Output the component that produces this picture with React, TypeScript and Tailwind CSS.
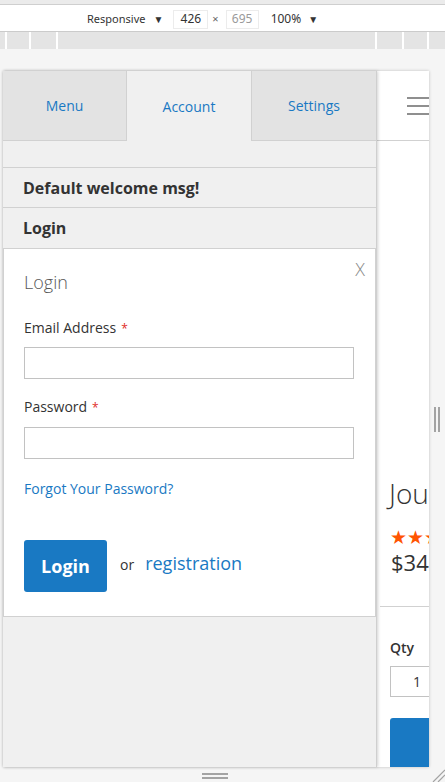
import React from 'react';

const TABS = [
    { label: 'Menu', active: false },
    { label: 'Account', active: true },
    { label: 'Settings', active: false },
];

function DeviceToolbar() {
    return (
        <div className="h-[27px] bg-white border-b border-[#cbcbcb] flex items-center pt-[2px] text-[11px] text-[#333] font-['Noto_Sans',sans-serif]">
            <div className="pl-[87px] flex items-center">
                <span>Responsive</span>
                <span className="ml-[8px] text-[10px]">▼</span>
            </div>
            <div className="ml-[10px] w-[35px] h-[19px] border border-[#ececec] flex items-center justify-center text-[12px]">426</div>
            <span className="ml-[4px] text-[11px] text-[#666]">×</span>
            <div className="ml-[7px] w-[33px] h-[19px] border border-[#ececec] flex items-center justify-center text-[12px] text-[#9a9a9a]">695</div>
            <div className="ml-[12px] flex items-center">
                <span className="text-[12px]">100%</span>
                <span className="ml-[7px] text-[10px]">▼</span>
            </div>
        </div>
    );
}

function Ruler() {
    const segs = [7, 24, 27, 319, 27, 25];
    return (
        <div className="h-[17px] bg-[#e4e4e4] flex">
            {segs.map((w, i) => (
                <div key={i} style={{ width: w }} className="h-full border-r-2 border-white shrink-0" />
            ))}
        </div>
    );
}

function LoginPopup() {
    return (
        <div className="relative bg-white border border-[#d1d1d1] px-[20px] pt-[20px] pb-[24px]">
            <span className="absolute right-[10px] top-[7px] text-[18px] font-light text-[#8a8a8a]">X</span>
            <h2 className="text-[18px] leading-[26px] font-light text-[#575757]">Login</h2>

            <label className="block mt-[23px] text-[14px] leading-[20px] text-[#333]">
                Email Address<span className="ml-[5px] text-[12px] text-[#e02b27]">*</span>
            </label>
            <input className="block mt-[8px] w-[330px] h-[32px] border border-[#c2c2c2] bg-white" />

            <label className="block mt-[18px] text-[14px] leading-[20px] text-[#333]">
                Password<span className="ml-[5px] text-[12px] text-[#e02b27]">*</span>
            </label>
            <input type="password" className="block mt-[9px] w-[330px] h-[32px] border border-[#c2c2c2] bg-white" />

            <a className="block mt-[20px] text-[14px] leading-[20px] text-[#1979c3]">Forgot Your Password?</a>

            <div className="mt-[41px] flex items-center">
                <button className="w-[83px] h-[52px] bg-[#1979c3] rounded-[3px] text-white font-bold text-[18px]">Login</button>
                <div className="flex items-baseline mb-[6px]">
                    <span className="ml-[13px] text-[14px] text-[#333]">or</span>
                    <a className="ml-[11px] text-[18px] text-[#1979c3]">registration</a>
                </div>
            </div>
        </div>
    );
}

function Drawer() {
    return (
        <div className="w-[374px] shrink-0 h-full bg-[#f0f0f0] flex flex-col border-r border-[#cfcfcf] shadow-[1px_0_3px_rgba(0,0,0,0.18)] relative z-10">
            <div className="h-[70px] flex shrink-0">
                {TABS.map((t, i) => (
                    <div
                        key={t.label}
                        className={`flex items-center justify-center text-[14px] text-[#1979c3] ${i === 2 ? 'flex-1' : 'w-[124px]'} ${t.active
                            ? 'bg-[#f0f0f0]'
                            : 'bg-[#e3e3e3] border-b border-[#d1d1d1]'
                            } ${i === 0 ? 'border-r border-[#d1d1d1]' : ''} ${i === 2 ? 'border-l border-[#d1d1d1]' : ''}`}
                    >
                        {t.label}
                    </div>
                ))}
            </div>
            <div className="h-[26px]" />
            <div className="h-[40px] border-t border-[#d1d1d1] flex items-center pl-[20px] text-[16px] font-bold text-[#333]">
                Default welcome msg!
            </div>
            <div className="h-[41px] border-t border-[#d1d1d1] flex items-center pl-[20px] text-[16px] font-bold text-[#333]">
                Login
            </div>
            <LoginPopup />
        </div>
    );
}

function PageBehind() {
    return (
        <div className="flex-1 h-full bg-white overflow-hidden">
            <div className="h-[70px] border-b border-[#d1d1d1] flex items-center pl-[30px]">
                <div className="flex flex-col gap-[6px]">
                    <div className="w-[28px] h-[2px] bg-[#8f8f8f]" />
                    <div className="w-[28px] h-[2px] bg-[#8f8f8f]" />
                    <div className="w-[28px] h-[2px] bg-[#8f8f8f]" />
                </div>
            </div>
            <div className="w-[300px]">
                <div className="mt-[333px] pl-[12px] text-[28px] leading-[38px] font-light text-[#333] whitespace-nowrap">Journey Backpack</div>
                <div className="mt-[14px] pl-[13px] text-[19px] leading-[22px] text-[#ff5501] font-['DejaVu_Sans',sans-serif] whitespace-nowrap">★★★★</div>
                <div className="pl-[14px] text-[22px] leading-[28px] text-[#333] whitespace-nowrap">$34.00</div>
            </div>
            <div className="mt-[30px] ml-[3px] w-[300px] border-t border-[#d1d1d1]" />
            <div className="w-[300px] pl-[13px]">
                <div className="mt-[31px] text-[14px] leading-[20px] font-semibold text-[#333]">Qty</div>
                <div className="mt-[8px] w-[54px] h-[31px] border border-[#c2c2c2] flex items-center justify-center text-[14px] text-[#333]">1</div>
                <div className="mt-[21px] w-[200px] h-[60px] bg-[#1979c3] rounded-tl-[3px]" />
            </div>
        </div>
    );
}

export default function App() {
    return (
        <div className="w-[445px] h-[782px] overflow-hidden flex flex-col bg-[#f4f4f4] font-['Open_Sans',sans-serif]">
            <div className="h-[5px] bg-[#ebebeb] border-b border-[#cfcfcf] shrink-0" />
            <DeviceToolbar />
            <Ruler />
            <div className="flex-1 flex flex-col pt-[22px] bg-[#f5f5f5]">
                <div className="flex">
                    <div className="ml-[3px] w-[426px] h-[696px] flex shadow-[0_0_3px_rgba(0,0,0,0.22)]">
                        <Drawer />
                        <PageBehind />
                    </div>
                    <div className="flex-1 flex items-center justify-center">
                        <div className="flex gap-[2px]">
                            <div className="w-[2px] h-[25px] bg-[#a3a3a3]" />
                            <div className="w-[2px] h-[25px] bg-[#a3a3a3]" />
                        </div>
                    </div>
                </div>
                <div className="flex-1 flex">
                    <div className="w-[429px] flex justify-center pt-[6px]">
                        <div className="flex flex-col gap-[2px]">
                            <div className="w-[26px] h-[2px] bg-[#a3a3a3]" />
                            <div className="w-[26px] h-[2px] bg-[#a3a3a3]" />
                        </div>
                    </div>
                    <svg width="16" height="15" viewBox="0 0 16 15" className="self-end">
                        <line x1="4" y1="15" x2="16" y2="3" stroke="#a3a3a3" strokeWidth="1.2" />
                        <line x1="9" y1="15" x2="16" y2="8" stroke="#a3a3a3" strokeWidth="1.2" />
                    </svg>
                </div>
            </div>
        </div>
    );
}
